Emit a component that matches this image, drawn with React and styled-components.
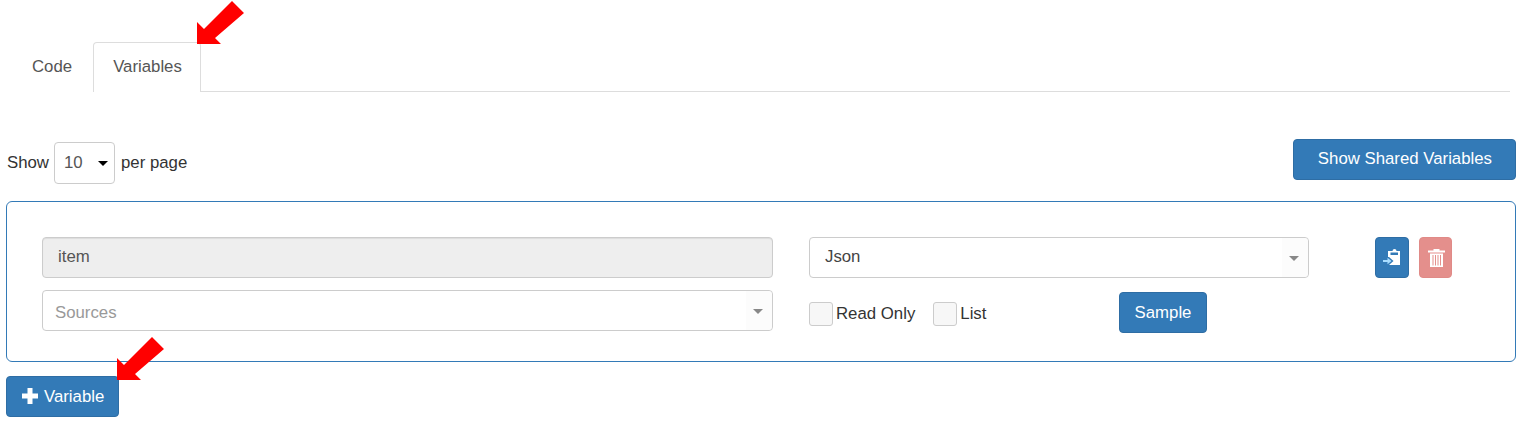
import React from "react";
import styled, { createGlobalStyle } from "styled-components";

const Global = createGlobalStyle`
  * { box-sizing: border-box; }
  html, body { margin: 0; background: #fff; }
  body { font-family: "Liberation Sans", Arial, sans-serif; font-size: 16.8px; color: #333; }
`;

const Page = styled.div`
  position: relative;
  width: 1524px;
  height: 423px;
  overflow: hidden;
  padding: 42px 8px 0 6px;
`;

const Tabs = styled.div`
  display: flex;
  margin: 0 6px 0 6px;
  height: 50px;
  border-bottom: 1px solid #ddd;
`;

const Tab = styled.div`
  height: 50px;
  padding: 0 ${(p) => (p.$active ? "18px" : "20px")} 2px 19px;
  display: flex;
  align-items: center;
  color: #555;
  background: #fff;
  border: 1px solid ${(p) => (p.$active ? "#ddd" : "transparent")};
  border-bottom: 0;
  border-radius: 4px 4px 0 0;
`;

const TopBar = styled.div`
  display: flex;
  justify-content: space-between;
  align-items: flex-start;
  margin-top: 47px;
  height: 62px;
`;

const PageSize = styled.div`
  display: flex;
  align-items: center;
  height: 42px;
  margin-top: 3px;
  margin-left: 1px;
`;

const SizeSelect = styled.div`
  position: relative;
  width: 61px;
  height: 42px;
  margin: 0 6px 0 5px;
  padding-left: 9px;
  display: flex;
  align-items: center;
  border: 1px solid #ccc;
  border-radius: 4px;
  color: #555;
`;

const Caret = styled.span`
  position: absolute;
  right: ${(p) => p.$right || "6px"};
  top: 50%;
  margin-top: -2px;
  width: 0;
  height: 0;
  border-left: 5px solid transparent;
  border-right: 5px solid transparent;
  border-top: 5px solid ${(p) => p.$color || "#000"};
`;

const Button = styled.button`
  font: inherit;
  color: #fff;
  background: #337ab7;
  border: 1px solid #2e6da4;
  border-radius: 4px;
  height: 41px;
  display: inline-flex;
  align-items: center;
  justify-content: center;
  white-space: nowrap;
`;

const SharedButton = styled(Button)`
  padding: 0 23px 2px 24px;
`;

const AddButton = styled(Button)`
  padding: 0 14px 0 15px;
  gap: 6px;
  svg {
    margin-top: -2px;
  }
`;

const SampleButton = styled(Button)`
  margin-left: auto;
  margin-right: 102px;
  margin-top: 2px;
  width: 88px;
  padding: 0;
`;

const Panel = styled.div`
  height: 161px;
  border: 1px solid #337ab7;
  border-radius: 6px;
  padding: 35px 35px 0;
  display: grid;
  grid-template-columns: 731px 500px 1fr;
  grid-template-rows: 41px 43px;
  row-gap: 12px;
  column-gap: 36px;
`;

const Field = styled.div`
  position: relative;
  height: 41px;
  display: flex;
  align-items: center;
  padding-left: ${(p) => p.$pad || "15px"};
  padding-top: ${(p) => (p.$muted ? "4px" : "0")};
  padding-bottom: ${(p) => (p.$muted ? "0" : "2px")};
  border: 1px solid #ccc;
  border-radius: 4px;
  background: ${(p) => (p.$disabled ? "#eee" : "#fff")};
  color: ${(p) => (p.$muted ? "#999" : "#555")};
  box-shadow: ${(p) => (p.$disabled ? "inset 0 1px 1px rgba(0,0,0,.075)" : "none")};
`;

const FieldText = styled.span`
  color: ${(p) => p.$color || "inherit"};
`;

const ArrowZone = styled.span`
  position: absolute;
  right: 0;
  top: 0;
  bottom: 0;
  width: 26px;
  background: #fcfcfc;
  border-radius: 0 4px 4px 0;
`;

const Actions = styled.div`
  display: flex;
  gap: 10px;
  padding-left: 30px;
`;

const IconButton = styled.button`
  width: ${(p) => p.$w};
  height: 41px;
  padding: 0;
  display: flex;
  align-items: center;
  justify-content: center;
  border: 1px solid ${(p) => p.$border};
  border-radius: 4px;
  background: ${(p) => p.$bg};
`;

const OptionsRow = styled.div`
  display: flex;
  align-items: flex-start;
  height: 43px;
`;

const CheckLabel = styled.label`
  display: flex;
  align-items: center;
  gap: 3px;
  margin-top: 12px;
  margin-right: 18px;
  height: 24px;
  color: #333;
`;

const Box = styled.span`
  width: 24px;
  height: 24px;
  background: #f7f7f7;
  border: 1px solid #ccc;
  border-radius: 3px;
`;

const AddRow = styled.div`
  margin-top: 14px;
`;

const PointerSvg = styled.svg`
  position: absolute;
  left: ${(p) => p.$x}px;
  top: ${(p) => p.$y}px;
`;

const Pointer = ({ x, y }) => (
  <PointerSvg $x={x} $y={y} width="50" height="46" viewBox="0 0 50 46">
    <path d="M1 22 L8 29 L36 1 L48 13 L19 38 L25 44 L1 44 Z" fill="#ff0000" />
  </PointerSvg>
);

const PasteIcon = () => (
  <svg width="18" height="17" viewBox="0 0 18 17">
    <path
      fill="#fff"
      fillRule="evenodd"
      d="M5 2 H9.500 Q9.500 0 11.500 0 Q13.500 0 13.500 2 H17 V16 H6 L10.500 12 L6 8 H5 Z M7.500 3.500 H15 V6 H7.500 Z"
    />
    <path fill="#a8dcff" d="M0 11 H4.500 V8.800 L8.500 12 L4.500 15.200 V13 H0 Z" />
  </svg>
);

const TrashIcon = () => (
  <svg width="18" height="18" viewBox="-1 0 18 18">
    <path fill="#fff" d="M5.500 0 H11.500 V1.500 H17 V3.500 H0 V1.500 H5.500 Z" />
    <path
      fill="#fff"
      fillRule="evenodd"
      d="M2 4.500 H15 V18 H2 Z M4.500 6 V16.500 H5.500 V6 Z M7 6 V16.500 H8 V6 Z M9.500 6 V16.500 H10.500 V6 Z M12 6 V16.500 H13 V6 Z"
    />
  </svg>
);

const PlusIcon = () => (
  <svg width="16" height="16" viewBox="0 0 16 16">
    <path fill="#fff" d="M5.500 0 H10.500 V5.500 H16 V10.500 H10.500 V16 H5.500 V10.500 H0 V5.500 H5.500 Z" />
  </svg>
);

export default function App() {
  return (
    <Page>
      <Global />
      <Tabs>
        <Tab>Code</Tab>
        <Tab $active>Variables</Tab>
      </Tabs>
      <TopBar>
        <PageSize>
          Show
          <SizeSelect>
            10
            <Caret />
          </SizeSelect>
          per page
        </PageSize>
        <SharedButton>Show Shared Variables</SharedButton>
      </TopBar>
      <Panel>
        <Field $disabled>item</Field>
        <Field>
          <FieldText $color="#444">Json</FieldText>
          <ArrowZone />
          <Caret $right="9px" $color="#888" />
        </Field>
        <Actions>
          <IconButton $w="34px" $bg="#337ab7" $border="#2e6da4">
            <PasteIcon />
          </IconButton>
          <IconButton $w="33px" $bg="#e48f8c" $border="#e08a87">
            <TrashIcon />
          </IconButton>
        </Actions>
        <Field $muted $pad="12px">
          Sources
          <ArrowZone />
          <Caret $right="9px" $color="#888" />
        </Field>
        <OptionsRow>
          <CheckLabel>
            <Box />
            Read Only
          </CheckLabel>
          <CheckLabel>
            <Box />
            List
          </CheckLabel>
          <SampleButton>Sample</SampleButton>
        </OptionsRow>
      </Panel>
      <AddRow>
        <AddButton>
          <PlusIcon />
          Variable
        </AddButton>
      </AddRow>
      <Pointer x={196} y={0} />
      <Pointer x={116} y={336} />
    </Page>
  );
}
